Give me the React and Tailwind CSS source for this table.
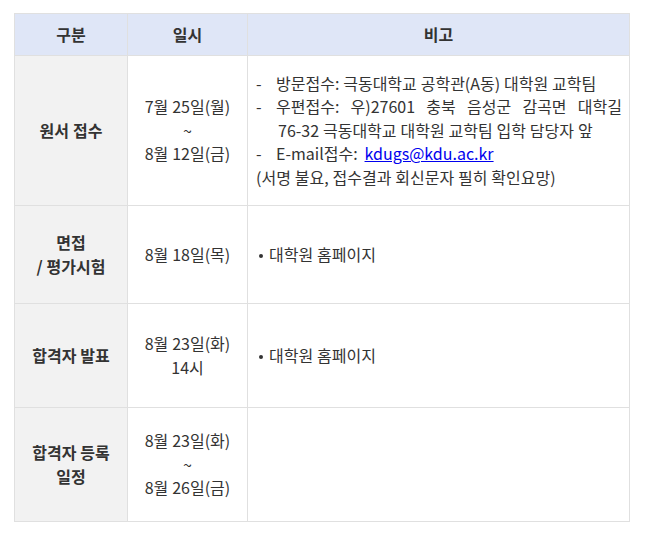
export default function App() {
    const cell = "border border-[#e0e0e0] align-middle";
    const head = "border border-[#e0e0e0] bg-[#dfe6f7] font-bold text-center h-[42px]";
    const first = "border border-[#e0e0e0] bg-[#f2f2f2] font-bold text-center";

    return (
        <div className="bg-white w-[650px] h-[539px] pt-[13px] pl-[14px] font-['Malgun_Gothic','Noto_Sans_CJK_KR',sans-serif] text-[16px] leading-[23.5px] [word-spacing:0.3px] text-[#333]">
            <table className="border-collapse table-fixed w-[615px]">
                <colgroup>
                    <col className="w-[113px]" />
                    <col className="w-[120px]" />
                    <col className="w-[382px]" />
                </colgroup>
                <thead>
                    <tr>
                        <th className={head}>구분</th>
                        <th className={head}>일시</th>
                        <th className={head}>비고</th>
                    </tr>
                </thead>
                <tbody>
                    <tr className="h-[150px]">
                        <td className={first}>원서 접수</td>
                        <td className={cell + " text-center"}>
                            <div>7월 25일(월)</div>
                            <div>~</div>
                            <div>8월 12일(금)</div>
                        </td>
                        <td className={cell + " pl-[8px] pr-[7px]"}>
                            <div className="flex">
                                <span className="w-[20px] shrink-0">-</span>
                                <span className="whitespace-nowrap">방문접수: 극동대학교 공학관(A동) 대학원 교학팀</span>
                            </div>
                            <div className="flex">
                                <span className="w-[20px] shrink-0">-</span>
                                <span className="flex-1 whitespace-nowrap text-justify [text-align-last:justify]">우편접수: 우)27601 충북 음성군 감곡면 대학길</span>
                            </div>
                            <div className="pl-[22px] whitespace-nowrap">76-32 극동대학교 대학원 교학팀 입학 담당자 앞</div>
                            <div className="flex">
                                <span className="w-[20px] shrink-0">-</span>
                                <span>
                                    E-mail접수: <a href="#" className="text-[#0000ee] underline ml-[3px]">kdugs@kdu.ac.kr</a>
                                </span>
                            </div>
                            <div className="whitespace-nowrap">(서명 불요, 접수결과 회신문자 필히 확인요망)</div>
                        </td>
                    </tr>
                    <tr className="h-[98px]">
                        <td className={first}>
                            <div>면접</div>
                            <div>/ 평가시험</div>
                        </td>
                        <td className={cell + " text-center"}>8월 18일(목)</td>
                        <td className={cell + " pl-[11px]"}>
                            <span className="inline-block w-[4px] h-[4px] rounded-full bg-[#333] align-middle mr-[6px]"></span>대학원 홈페이지
                        </td>
                    </tr>
                    <tr className="h-[104px]">
                        <td className={first}>합격자 발표</td>
                        <td className={cell + " text-center"}>
                            <div>8월 23일(화)</div>
                            <div>14시</div>
                        </td>
                        <td className={cell + " pl-[11px]"}>
                            <span className="inline-block w-[4px] h-[4px] rounded-full bg-[#333] align-middle mr-[6px]"></span>대학원 홈페이지
                        </td>
                    </tr>
                    <tr className="h-[114px]">
                        <td className={first}>
                            <div>합격자 등록</div>
                            <div>일정</div>
                        </td>
                        <td className={cell + " text-center"}>
                            <div>8월 23일(화)</div>
                            <div>~</div>
                            <div>8월 26일(금)</div>
                        </td>
                        <td className={cell}></td>
                    </tr>
                </tbody>
            </table>
        </div>
    );
}
